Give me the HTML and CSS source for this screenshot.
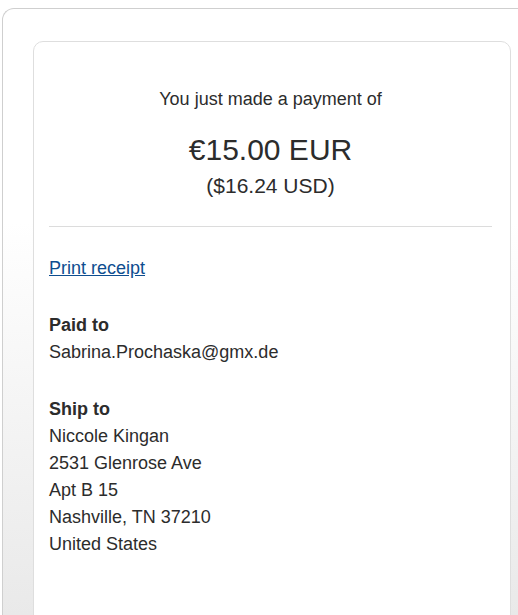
FILE: index.html
```html
<!DOCTYPE html>
<html lang="en">
<head>
<meta charset="utf-8">
<title>Payment</title>
<link rel="stylesheet" href="styles.css">
</head>
<body>
<div class="outer">
  <div class="card">
    <div class="summary">
      <p class="lead">You just made a payment of</p>
      <p class="amount">€15.00 EUR</p>
      <p class="converted">($16.24 USD)</p>
    </div>
    <hr class="divider">
    <p class="print"><a href="#">Print receipt</a></p>
    <div class="block">
      <div class="label">Paid to</div>
      <div>Sabrina.Prochaska@gmx.de</div>
    </div>
    <div class="block">
      <div class="label">Ship to</div>
      <div>Niccole Kingan</div>
      <div>2531 Glenrose Ave</div>
      <div>Apt B 15</div>
      <div>Nashville, TN 37210</div>
      <div>United States</div>
    </div>
  </div>
</div>
</body>
</html>
```
FILE: styles.css
```css
html, body {
  margin: 0;
  padding: 0;
  height: 100%;
  overflow: hidden;
}
body {
  padding: 8px 0 0 2px;
  font-family: "Liberation Sans", Arial, sans-serif;
  color: #2c2c2c;
  background: #fff;
  box-sizing: border-box;
}
.outer {
  border: 1px solid #cfcfcf;
  border-right: none;
  border-bottom: none;
  border-radius: 12px 0 0 0;
  background: linear-gradient(to bottom, #ffffff 0%, #ffffff 35%, #e9e9e9 100%);
  height: 100%;
  box-sizing: border-box;
  padding: 32px 0 0 30px;
  overflow: hidden;
}
.card {
  width: 478px;
  box-sizing: border-box;
  height: 700px;
  background: #fff;
  border: 1px solid #dedede;
  border-radius: 10px;
  padding: 0 18px 0 15px;
}
.summary {
  text-align: center;
  padding-top: 45px;
}
.summary p {
  margin: 0;
}
.lead {
  font-size: 18px;
  line-height: 24px;
}
.amount {
  font-size: 30px;
  line-height: 36px;
  margin-top: 21px !important;
}
.converted {
  font-size: 21px;
  line-height: 26px;
  margin-top: 5px !important;
}
.divider {
  border: none;
  border-top: 1px solid #dcdcdc;
  margin: 27px 0 0 0;
}
.print {
  margin: 28px 0 0 0;
  font-size: 18px;
  line-height: 27px;
}
.print a {
  color: #0e4d8f;
  text-decoration: underline;
}
.block {
  font-size: 18px;
  line-height: 27px;
  margin-top: 30px;
}
.label {
  font-weight: bold;
}
```
